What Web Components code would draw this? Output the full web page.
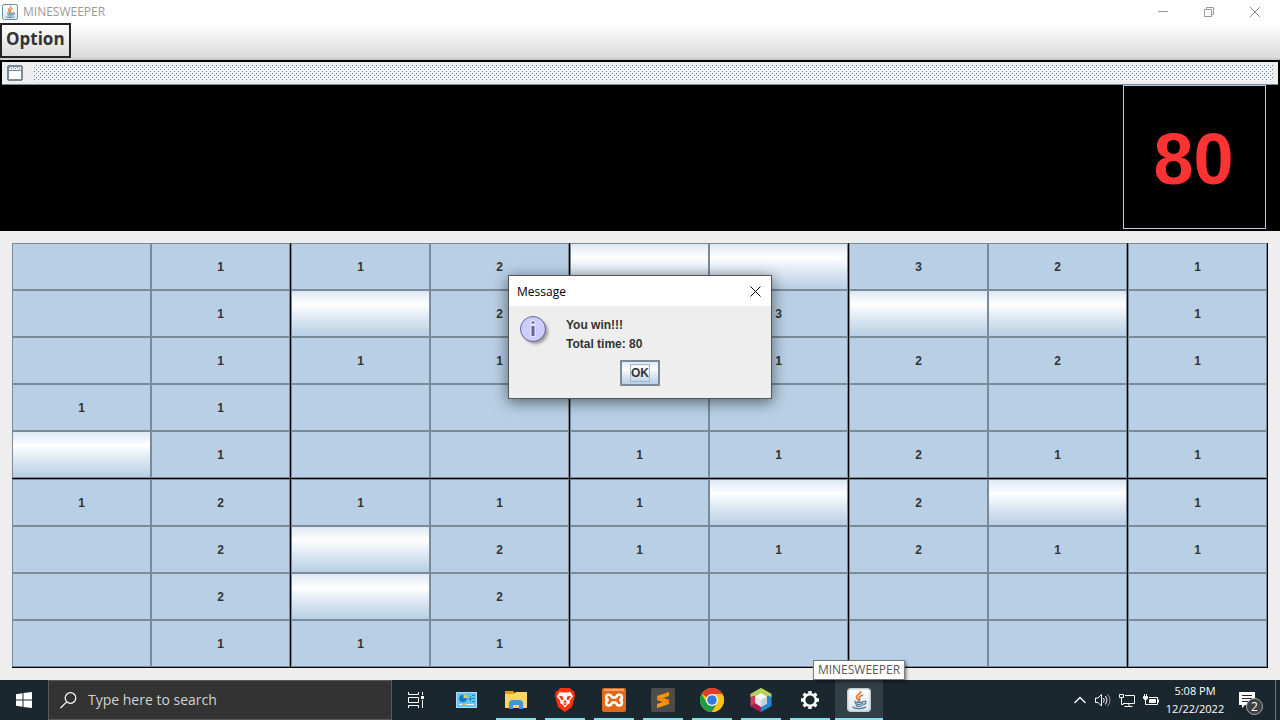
<!DOCTYPE html>
<html lang="en">
<head>
<meta charset="utf-8">
<title>MINESWEEPER</title>
<style>
html, body { margin: 0; height: 100%; }
body { font-family: "Open Sans", "Noto Sans", sans-serif; font-size: 12px; overflow: hidden; }
</style>
</head>
<body>
<x-desktop></x-desktop>
<script>
const define = (name, html, init) => customElements.define(name, class extends HTMLElement {
  constructor() {
    super();
    const t = document.createElement('template');
    t.innerHTML = '<style>*{box-sizing:border-box}button{font:inherit;color:inherit;margin:0;padding:0;border:0;background:none}svg{display:block}</style>' + html;
    this.attachShadow({ mode: 'open' }).append(t.content.cloneNode(true));
  }
  connectedCallback() { if (init) init.call(this, this.shadowRoot); }
});

define('java-icon', `
<style>:host{display:block;width:24px;height:24px}svg{width:100%;height:100%}.tile{stroke:var(--edge,#c3ccd3)}</style>
<svg viewBox="0 0 24 24" fill="none" stroke-linecap="round">
<defs><linearGradient id="g" x2="0" y2="1"><stop stop-color="#fff"/><stop offset="1" stop-color="#dde5ec"/></linearGradient></defs>
<rect class="tile" x=".7" y=".7" width="22.6" height="22.6" rx="3" fill="url(#g)" stroke-width="1.4"/>
<path d="M13.500 3.500c1 2-4.500 3.400-4 6 .3 1.200 1.700 2 1.900 3M15.500 7.200c-3 1-4 2-3 3.300.7.900.4 1.700-.4 2.400" stroke="#e8742a" stroke-width="1.600"/>
<path d="M8 13.300c-2 1.200 7 1.300 9 .2M8.500 15.500c1 1.100 5 1.100 7 .2M9 17.600c1 .9 4.500.9 6 .1M16.500 13.500c3.500-1 3.200 2.200.2 3M6 19c0 1.800 10 2.200 12.500.3" stroke="#4c7898" stroke-width="1.300"/>
</svg>`);

define('title-bar', `
<style>
:host{display:flex;align-items:center;height:23px;background:#fff;color:#999}
java-icon{width:16px;height:16px;margin:0 5px 0 2px;--edge:#55809c}
h1{flex:1;margin:0;font:inherit;line-height:22px}
button{width:46px;height:22px;display:grid;place-items:center}
.controls{display:flex;padding-right:2px}
</style>
<java-icon></java-icon><h1><slot></slot></h1>
<div class="controls">
<button aria-label="Minimize"><svg width="10" height="10" stroke="#999"><path d="M0 4.500h10"/></svg></button>
<button aria-label="Restore"><svg width="10" height="10" fill="none" stroke="#999"><path d="M.5 2.500h7v7h-7zM2.500 2.500v-2h7v7h-2"/></svg></button>
<button aria-label="Close"><svg width="10" height="10" stroke="#888"><path d="M0 0l10 10M10 0L0 10"/></svg></button>
</div>`);

define('menu-bar', `
<style>
:host{display:flex;height:37px;background:linear-gradient(#fff,#dadada);border-bottom:2px solid #ccc}
button{height:35px;padding:0 4px 4px;border:2px solid #222;color:#333;font-weight:bold;font-size:17px;line-height:27px}
</style>
<button><slot></slot></button>`);

define('frame-header', `
<style>
:host{display:flex;align-items:center;height:23px;background:#eee;border-bottom:1px solid #7a8a99;padding:0 5px;gap:11px}
.bumps{flex:1;height:16px;overflow:hidden}
.bumps svg{width:100%;height:16px}
</style>
<svg width="16" height="16" shape-rendering="crispEdges"><path fill="#7a8a99" d="M1 0h14v1h1v14h-1v1H1v-1H0V1h1z"/><path fill="#eee" d="M2 2h12v2H2z"/><path fill="#fff" d="M2 6h12v8H2z"/><path fill="#eee" d="M2 4h12v1H2z"/><path d="M2 2h1v1h-1zM6 2h1v1h-1zM10 2h1v1h-1zM4 3h1v1h-1zM8 3h1v1h-1zM12 3h1v1h-1z" fill="#6382bf"/></svg>
<div class="bumps"><svg shape-rendering="crispEdges"><defs><pattern id="b" width="4" height="4" patternUnits="userSpaceOnUse"><path fill="#fff" d="M1 3h1v1h-1zM3 1h1v1h-1z"/><path fill="#7088a0" d="M0 2h1v1h-1zM2 0h1v1h-1z"/></pattern></defs><rect width="100%" height="16" fill="#f0f3f6"/><rect width="100%" height="16" fill="url(#b)"/></svg></div>`);

define('time-panel', `
<style>
:host{display:flex;justify-content:flex-end;height:146px;padding:0 12px 2px}
output{width:143px;height:144px;border:1px solid #b8cfe5;display:grid;place-items:center;color:#f33;font:bold 72px/80px "Liberation Sans",Arial,sans-serif;padding:4px 2px 0 0}
</style>
<output aria-label="Elapsed time"><slot></slot></output>`);

define('mine-cell', `
<style>
:host{display:grid}
button{border:1px solid #7a8a99;background:#b8cfe5;color:#333;font:bold 12px/16px "Liberation Sans",Arial,sans-serif}
:host([covered]) button{background:linear-gradient(#dde8f3,#fff 30%,#dde8f3 60%,#b8cfe5)}
</style>
<button><slot></slot></button>`);

define('mine-board', `
<style>
:host{display:grid;flex:1;background:#000;
grid-template-columns:1fr 1fr 1px 1fr 1fr 1px 1fr 1fr 1px 1fr 1fr 1px 1fr 1px;
grid-template-rows:repeat(5,1fr) 1px repeat(4,1fr) 1px}
</style>`, function (root) {
  const rows = this.getAttribute('rows').split('/');
  rows.forEach((row, r) => [...row].forEach((ch, c) => {
    const cell = document.createElement('mine-cell');
    cell.style.gridArea = `${r + 1 + (r > 4)} / ${c + 1 + (c >> 1)}`;
    if (ch === '#') cell.setAttribute('covered', ''); else if (ch !== '.') cell.textContent = ch;
    root.append(cell);
  }));
});

define('message-dialog', `
<style>
:host{display:block;width:264px;border:1px solid #555;background:#eee;box-shadow:0 3px 14px #0008;color:#333}
header{display:flex;justify-content:space-between;align-items:center;height:30px;background:#fff;color:#000;padding:0 10px 0 8px}
h2{margin:0;font:inherit}
.body{display:grid;grid-template-columns:46px 1fr;padding:10px 11px 12px;font:bold 12px/19px "Liberation Sans",Arial,sans-serif}
.icon{height:38px}
::slotted(p){margin:0}
footer{grid-column:1/-1;display:flex;justify-content:center;padding-top:6px}
.ok{width:40px;height:26px;border:2px solid #7a8a99;background:linear-gradient(#dde8f3,#fff 30%,#dde8f3 60%,#b8cfe5);display:grid;place-items:center;line-height:16px}
.ok span{border:1px solid #a3b8cc}
</style>
<header><h2>Message</h2><button aria-label="Close"><svg width="11" height="11" stroke="#000"><path d="M.5.5l10 10M10.500.5l-10 10"/></svg></button></header>
<div class="body">
<svg class="icon" width="32"><defs><filter id="s"><feGaussianBlur stdDeviation="1.500"/></filter></defs><circle cx="15.500" cy="15.500" r="12.500" fill="#777" opacity=".7" filter="url(#s)"/><circle cx="13" cy="13" r="12.500" fill="#ccf" stroke="#669"/><path fill="#669" stroke="#fff" stroke-width=".8" d="M11 5h4v3h-4zM11 9.500h4v11h-4z"/></svg>
<div><slot></slot></div>
<footer><button class="ok"><span>OK</span></button></footer>
</div>`);

define('game-window', `
<style>
:host{display:flex;flex-direction:column;flex:1;min-height:0;position:relative;background:#eee}
.top{background:#000;padding:2px 2px 0;flex:none}
main{flex:1;display:flex;padding:12px 12px}
.modal{position:absolute;inset:0;display:grid;place-items:center;padding-bottom:6px}
</style>
<title-bar>MINESWEEPER</title-bar>
<menu-bar>Option</menu-bar>
<section class="top"><frame-header></frame-header><time-panel>80</time-panel></section>
<main><mine-board rows=".112##321/.1#2.3##1/.11111221/11......./#1..11211/12111#2#1/.2#211211/.2#2...../.111....."></mine-board></main>
<div class="modal"><message-dialog><p>You win!!!</p><p>Total time: 80</p></message-dialog></div>`);

define('task-item', `
<style>
:host{display:block;position:relative;width:48px;height:40px}
button{width:100%;height:100%;display:grid;place-items:center;color:#fff}
:host([open]) button{border-bottom:2px solid #83e3e8;width:40px;margin:0 4px;padding-top:2px}
:host([active]){background:#333f46}
:host([active]) button{width:48px;margin:0}
::slotted([slot=tip]){position:absolute;bottom:100%;left:50%;transform:translateX(-50%);height:20px;box-sizing:border-box;border:1px solid #767676;background:#fff;color:#575757;padding:0 4px;line-height:18px;white-space:nowrap;box-shadow:2px 2px 3px #0007}
</style>
<button><slot></slot></button><slot name="tip"></slot>`, function (root) {
  root.querySelector('button').setAttribute('aria-label', this.getAttribute('name'));
});

define('system-tray', `
<style>
:host{display:flex;align-items:center;color:#fff;height:40px}
.icons{display:flex;gap:8px;align-items:center}
button{display:block}
.clock{width:72px;text-align:center;line-height:18px;font-size:11px}
.note{position:relative;margin-left:8px;width:24px;height:28px}
.badge{position:absolute;left:7px;top:12px;width:17px;height:17px;border-radius:50%;border:1px solid #aaa;background:#3a4043;text-align:center;font-size:12px;line-height:15px}
.peek{width:5px;height:40px;border-left:1px solid #6c777c;margin-left:12px}
</style>
<div class="icons">
<button aria-label="Hidden icons"><svg width="14" height="16" fill="none" stroke="#fff" stroke-width="1.300"><path d="M1.500 11L7 5.500 12.500 11"/></svg></button>
<button aria-label="Volume"><svg width="16" height="16" fill="none" stroke="#fff"><path d="M.5 6v4.500h2.500L6.500 14V2.500L3 6zM8.500 6q1.500 2.200 0 4.500M10.500 4q3 4.200 0 8.500"/><path d="M12.500 2q5 6 0 12.500" opacity=".5"/></svg></button>
<button aria-label="Network"><svg width="16" height="16" fill="none" stroke="#fff"><path d="M6 3.500h9.500v8H4M10 12v2.500M5.500 14.500h8M.5 2.500h4v3h-4zM2.500 6v6.500h2"/></svg></button>
<button aria-label="Battery"><svg width="16" height="16" fill="none" stroke="#fff"><path d="M6 5.500h8.500v7h-10M15.500 7.500v3"/><path fill="#fff" d="M6.500 7.500h6v3h-6zM.5 4.500h4v2l-1 1h-2l-1-1z"/><path d="M1.500 2v3M3.500 2v3M2.500 8v4.500h2"/></svg></button>
</div>
<div class="clock">5:08 PM<br>12/22/2022</div>
<button class="note" aria-label="Notifications"><svg width="17" height="17"><path fill="#fff" d="M0 0h16v13H6l-3 3v-3H0z"/><path stroke="#1b272e" d="M3 3.500h10M3 6.500h10M3 9.500h7"/></svg><span class="badge">2</span></button>
<div class="peek"></div>`);

define('task-bar', `
<style>
:host{display:flex;flex:none;height:40px;background:#1b272e;position:relative}
.start{width:48px;display:grid;place-items:center}
.search{width:344px;display:flex;align-items:center;border:1px solid #5b5b5b;background:#333;padding-left:11px;gap:11px}
input{flex:1;min-width:0;border:0;outline:0;padding:0;background:none;font:inherit;font-size:14px;line-height:20px}
input::placeholder{color:#d2d2d2;opacity:1}
.view{width:48px;display:grid;place-items:center}
.apps{display:flex;gap:1px;margin-left:3px;flex:1}
</style>
<button class="start" aria-label="Start"><svg width="16" height="16" fill="#fff"><path d="M0 2.200L6.500 1.300v6.200H0zM7.500 1.100L16 0v7.500H7.500zM0 8.500h6.500v6.200L0 13.800zM7.500 8.500H16V16l-8.500-1.100z"/></svg></button>
<label class="search"><svg width="17" height="17" fill="none" stroke="#fff" stroke-width="1.200"><circle cx="10.500" cy="6" r="5.300"/><path d="M6.700 9.800L.5 16"/></svg><input aria-label="Search" placeholder="Type here to search"></label>
<button class="view" aria-label="Task view"><svg width="16" height="16" fill="none" stroke="#fff"><path d="M.5 0v2.500h10V0M.5 5.500h10v5H.5zM.5 16v-2.500h10V16M14.500 0v3M14.500 8v8"/><path fill="#fff" stroke="none" d="M13 4h3v3h-3z"/></svg></button>
<nav class="apps">
<task-item name="Control Panel"><svg width="22" height="18"><rect x=".5" y="1.500" width="20" height="15" fill="#62c6f7" stroke="#a9dffa"/><circle cx="7" cy="7.500" r="3.800" fill="#1e78bd"/><path d="M7.500 7V3.500A3.500 3.500 0 0111 7z" fill="#ffc83d"/><path d="M12 8.500h2M16 4.500h3M15 7.500h4M16 10.500h3M14.500 5v5" stroke="#2a7fb8"/><path d="M3 13.500h15" stroke="#e5f6ff"/><path d="M6 13h4v1H6z" fill="#f5b53b"/></svg></task-item>
<task-item name="File Explorer" open><svg width="22" height="20"><path d="M0 1h8l2 2h12v15H0z" fill="#e0a01c"/><path d="M0 4h9l2-2h11v16H0z" fill="#ffd666"/><path d="M4 19v-7l2-2h10l2 2v7h-4v-4H8v4z" fill="#3f96dc"/></svg></task-item>
<task-item name="Brave" open><svg width="20" height="24"><path d="M5 0h10l2 2.500 2 .5 1 5-3 11-7 5-7-5L0 8l1-5 2-.5z" fill="#fb3310"/><path d="M4.500 4l3.500.5h4l3.500-.5L18 8.500l-3.500 4.500.5 2-2.500 1.500L10 19.500l-2.500-3L5 15l.5-2L2 8.500z" fill="#fff"/><path d="M4 8l3.500.3 1 3.200-2 .8zM16 8l-3.500.3-1 3.200 2 .8zM9 12.500h2l.8 1.500L10 15l-1.800-1zM7.800 15.800L10 15.200l2.200.6L10 17.500z" fill="#fb3310"/></svg></task-item>
<task-item name="XAMPP" open><svg width="24" height="24"><rect width="24" height="24" rx="2" fill="#e06a1b"/><path d="M2 1h20v2H2z" fill="#f3a474"/><path d="M9.500 9.500h5M9.500 14.500h5M9.500 9.500a2.700 2.700 0 10-2.700 2.700M14.500 9.500a2.700 2.700 0 112.700 2.700M9.500 14.800a2.700 2.700 0 11-2.700-2.700M14.500 14.800a2.700 2.700 0 102.700-2.700" fill="none" stroke="#fff" stroke-width="2.600"/></svg></task-item>
<task-item name="Sublime Text" open><svg width="24" height="24"><rect width="24" height="24" rx="2" fill="#4c4c4c"/><path d="M6 8l12-4v4l-6 2 6 2v4L6 20v-4l6-2-6-2z" fill="#ff9800"/><path d="M6 8v4l12 4v-4z" fill="#f48b00"/></svg></task-item>
<task-item name="Chrome" open><svg width="24" height="24"><circle cx="12" cy="12" r="12" fill="#fbc116"/><path d="M12 12L1.600 6A12 12 0 0122.400 6z" fill="#e33b2e"/><path d="M1.600 6A12 12 0 0012 24l5.200-9L12 12l-5.200 3z" fill="#229a4b"/><path d="M12 6h10.400A12 12 0 0112 24l5.200-9z" fill="#fbc116"/><circle cx="12" cy="12" r="6" fill="#fff"/><circle cx="12" cy="12" r="4.800" fill="#3478e5"/></svg></task-item>
<task-item name="NetBeans" open><svg width="22" height="24"><path d="M11 0l10.500 6L11 12 .5 6z" fill="#a7c83f"/><path d="M.5 6L11 12v12L.5 18z" fill="#d23b63"/><path d="M21.500 6L11 12v12l10.500-6z" fill="#2488cf"/><path d="M11 0L.5 6v3L11 5l10.500 4V6z" fill="#b7d255"/><path d="M11 5l6 3.500v7L11 19l-6-3.500v-7z" fill="#f5f5f2"/><path d="M11 12l6-3.500v7L11 19z" fill="#c9ced2"/><path d="M11 12L5 8.500v7L11 19z" fill="#e6e6e8"/><path d="M.5 18l4.500-3 6 4v5z" fill="#a51e50"/></svg></task-item>
<task-item name="Settings" open><svg width="20" height="20" viewBox="-10 -10 20 20"><circle r="5.800" fill="none" stroke="#fff" stroke-width="2.400"/><g fill="#fff"><path id="t" d="M-1.700-9h3.400v3h-3.400zM-1.700 6h3.400v3h-3.400z"/><use href="#t" transform="rotate(45)"/><use href="#t" transform="rotate(90)"/><use href="#t" transform="rotate(135)"/></g></svg></task-item>
<task-item name="MINESWEEPER" open active><java-icon></java-icon><span slot="tip">MINESWEEPER</span></task-item>
</nav>
<system-tray></system-tray>`);

define('x-desktop', `
<style>:host{display:flex;flex-direction:column;height:100vh}</style>
<game-window></game-window><task-bar></task-bar>`);
</script>
</body>
</html>
